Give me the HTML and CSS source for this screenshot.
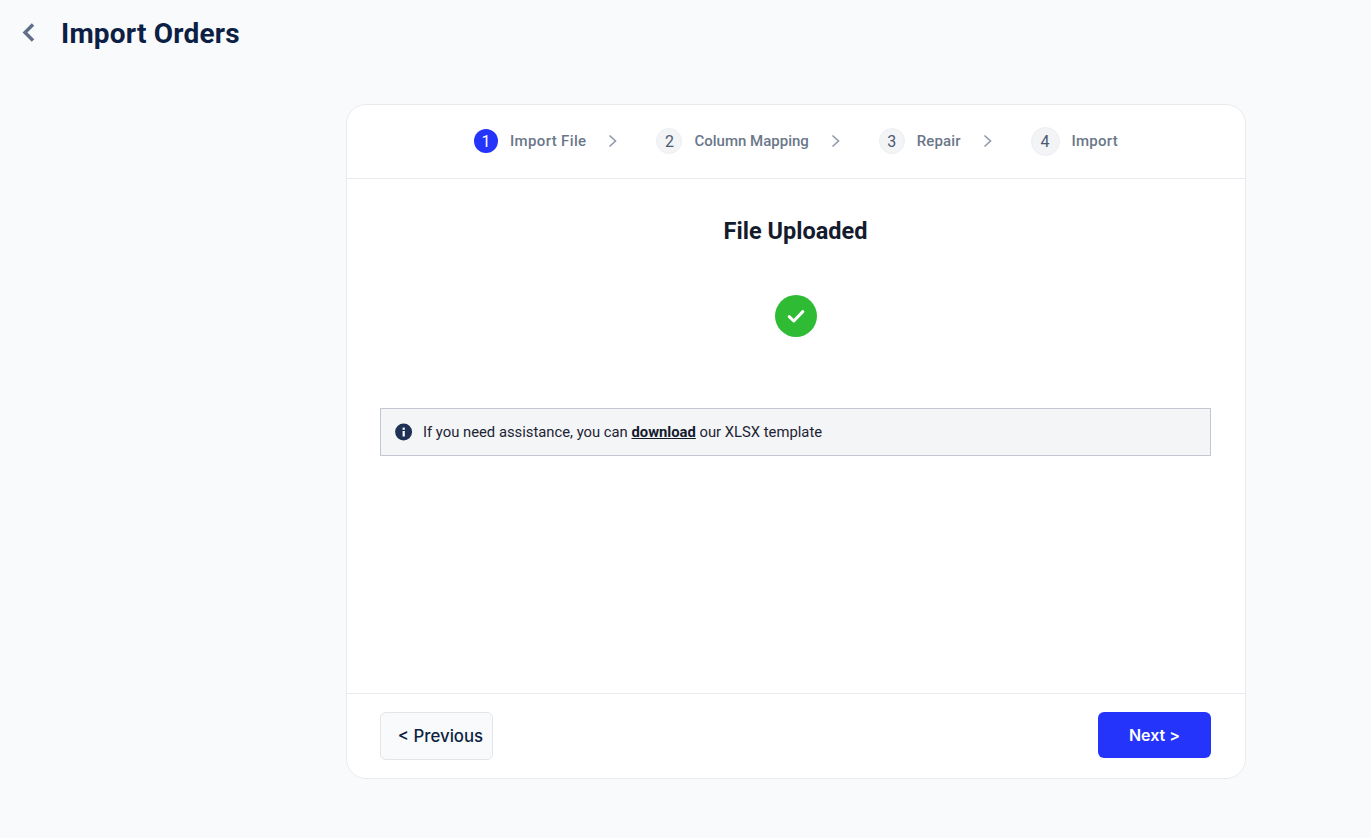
FILE: index.html
```html
<!DOCTYPE html>
<html lang="en">
  <head>
    <meta charset="utf-8">
    <title>Import Orders</title>
    <link rel="stylesheet" href="styles.css">
  </head>
  <body>
    <header class="page-header">
      <a href="#" class="back-link">
        <svg width="14" height="20" viewBox="0 0 14 20"><path d="M11 1.5 3 9.5l8 8" fill="none" stroke="#5f6f88" stroke-width="3.4"/></svg>
      </a>
      <h1 class="page-title">Import Orders</h1>
    </header>

    <main class="import-card">
      <div class="steps">
        <div class="step">
          <span class="step-num active">1</span>
          <span class="step-label label-1">Import File</span>
        </div>
        <svg class="step-arrow" width="9" height="14" viewBox="0 0 9 14"><path d="M1.5 1.5 7.5 7l-6 5.5" fill="none" stroke="#8f99a8" stroke-width="1.6"/></svg>
        <div class="step">
          <span class="step-num">2</span>
          <span class="step-label label-2">Column Mapping</span>
        </div>
        <svg class="step-arrow" width="9" height="14" viewBox="0 0 9 14"><path d="M1.5 1.5 7.5 7l-6 5.5" fill="none" stroke="#8f99a8" stroke-width="1.6"/></svg>
        <div class="step">
          <span class="step-num">3</span>
          <span class="step-label label-3">Repair</span>
        </div>
        <svg class="step-arrow" width="9" height="14" viewBox="0 0 9 14"><path d="M1.5 1.5 7.5 7l-6 5.5" fill="none" stroke="#8f99a8" stroke-width="1.6"/></svg>
        <div class="step">
          <span class="step-num last">4</span>
          <span class="step-label label-4">Import</span>
        </div>
      </div>

      <div class="card-body">
        <h2 class="body-title">File Uploaded</h2>
        <div class="success-icon">
          <svg width="22" height="18" viewBox="0 0 22 18"><path d="M4.2 9.6 8.8 14l9-9.4" fill="none" stroke="#fff" stroke-width="3" stroke-linecap="round" stroke-linejoin="round"/></svg>
        </div>
        <div class="notice">
          <svg class="notice-icon" width="18" height="18" viewBox="0 0 18 18">
            <circle cx="8.6" cy="9" r="8.5" fill="#1f3255"/>
            <rect x="7.6" y="8" width="2.2" height="5.5" fill="#fff"/>
            <rect x="7.6" y="4.6" width="2.2" height="2.2" fill="#fff"/>
          </svg>
          <span>If you need assistance, you can <a href="#">download</a> our XLSX template</span>
        </div>
      </div>

      <div class="card-footer">
        <button class="btn btn-prev">&lt; Previous</button>
        <button class="btn btn-next">Next &gt;</button>
      </div>
    </main>
  </body>
</html>
```

FILE: styles.css
```css
* {
  box-sizing: border-box;
}

body {
  margin: 0;
  padding: 0;
  background-color: #f9fafc;
  font-family: 'Roboto', 'Liberation Sans', sans-serif;
  font-size: 14px;
}

.page-header {
  display: flex;
  align-items: center;
  height: 66px;
  padding-left: 22px;
}

.back-link {
  display: flex;
  width: 39px;
}

.page-title {
  margin: 0;
  font-size: 28px;
  font-weight: 700;
  letter-spacing: 0.2px;
  color: #0d1f44;
}

.import-card {
  display: flex;
  flex-direction: column;
  width: 900px;
  height: 675px;
  margin: 38px 0 0 346px;
  background-color: #fff;
  border: 1px solid #e8eaee;
  border-radius: 20px;
}

.steps {
  display: flex;
  align-items: center;
  justify-content: center;
  height: 74px;
  padding-bottom: 1px;
  border-bottom: 1px solid #e8eaee;
}

.step {
  display: flex;
  align-items: center;
  gap: 12px;
}

.step-arrow {
  margin: 0 39px 0 22px;
}

.step-num {
  display: flex;
  align-items: center;
  justify-content: center;
  width: 26px;
  height: 26px;
  border: 1px solid #eceef2;
  border-radius: 50%;
  background-color: #f3f4f6;
  color: #4b5a72;
  font-size: 16px;
}

.step-num.active {
  width: 24px;
  height: 24px;
  border: 0;
  background-color: #2434fb;
  color: #fff;
}

.step-num.last {
  width: 29px;
  height: 29px;
}

.step-label {
  font-size: 15px;
  font-weight: 500;
  color: #6b7789;
}

.label-1 {
  letter-spacing: 0.35px;
}

.label-3 {
  letter-spacing: 0.1px;
}

.label-4 {
  letter-spacing: 0.25px;
}

.card-body {
  flex: 1;
  padding: 0 34px 0 33px;
}

.body-title {
  margin: 38px 0 0;
  font-size: 23.5px;
  font-weight: 700;
  line-height: 28px;
  color: #141b2d;
  text-align: center;
}

.success-icon {
  display: flex;
  align-items: center;
  justify-content: center;
  width: 42px;
  height: 42px;
  margin: 50px auto 0;
  border-radius: 50%;
  background-color: #2fbb33;
}

.notice {
  display: flex;
  align-items: center;
  height: 48px;
  margin-top: 71px;
  padding-left: 14px;
  background-color: #f4f5f7;
  border: 1px solid #c4c7cf;
  color: #1c2434;
  font-size: 14.8px;
}

.notice-icon {
  margin-right: 10px;
}

.notice a {
  color: #141b2d;
  font-weight: 700;
}

.card-footer {
  display: flex;
  align-items: flex-start;
  justify-content: space-between;
  height: 85px;
  padding: 18px 34px 0 33px;
  border-top: 1px solid #e8eaee;
}

.btn {
  width: 113px;
  border-radius: 6px;
  font-family: 'Inter', sans-serif;
  font-size: 16px;
  font-weight: 500;
}

.btn-prev {
  height: 48px;
  padding: 0 0 0 8px;
  background-color: #f9fafb;
  border: 1px solid #e3e5e9;
  color: #0d1f44;
  font-size: 16.8px;
}

.btn-next {
  height: 46px;
  background-color: #2434fb;
  border: 0;
  color: #fff;
  font-weight: 600;
}
```
